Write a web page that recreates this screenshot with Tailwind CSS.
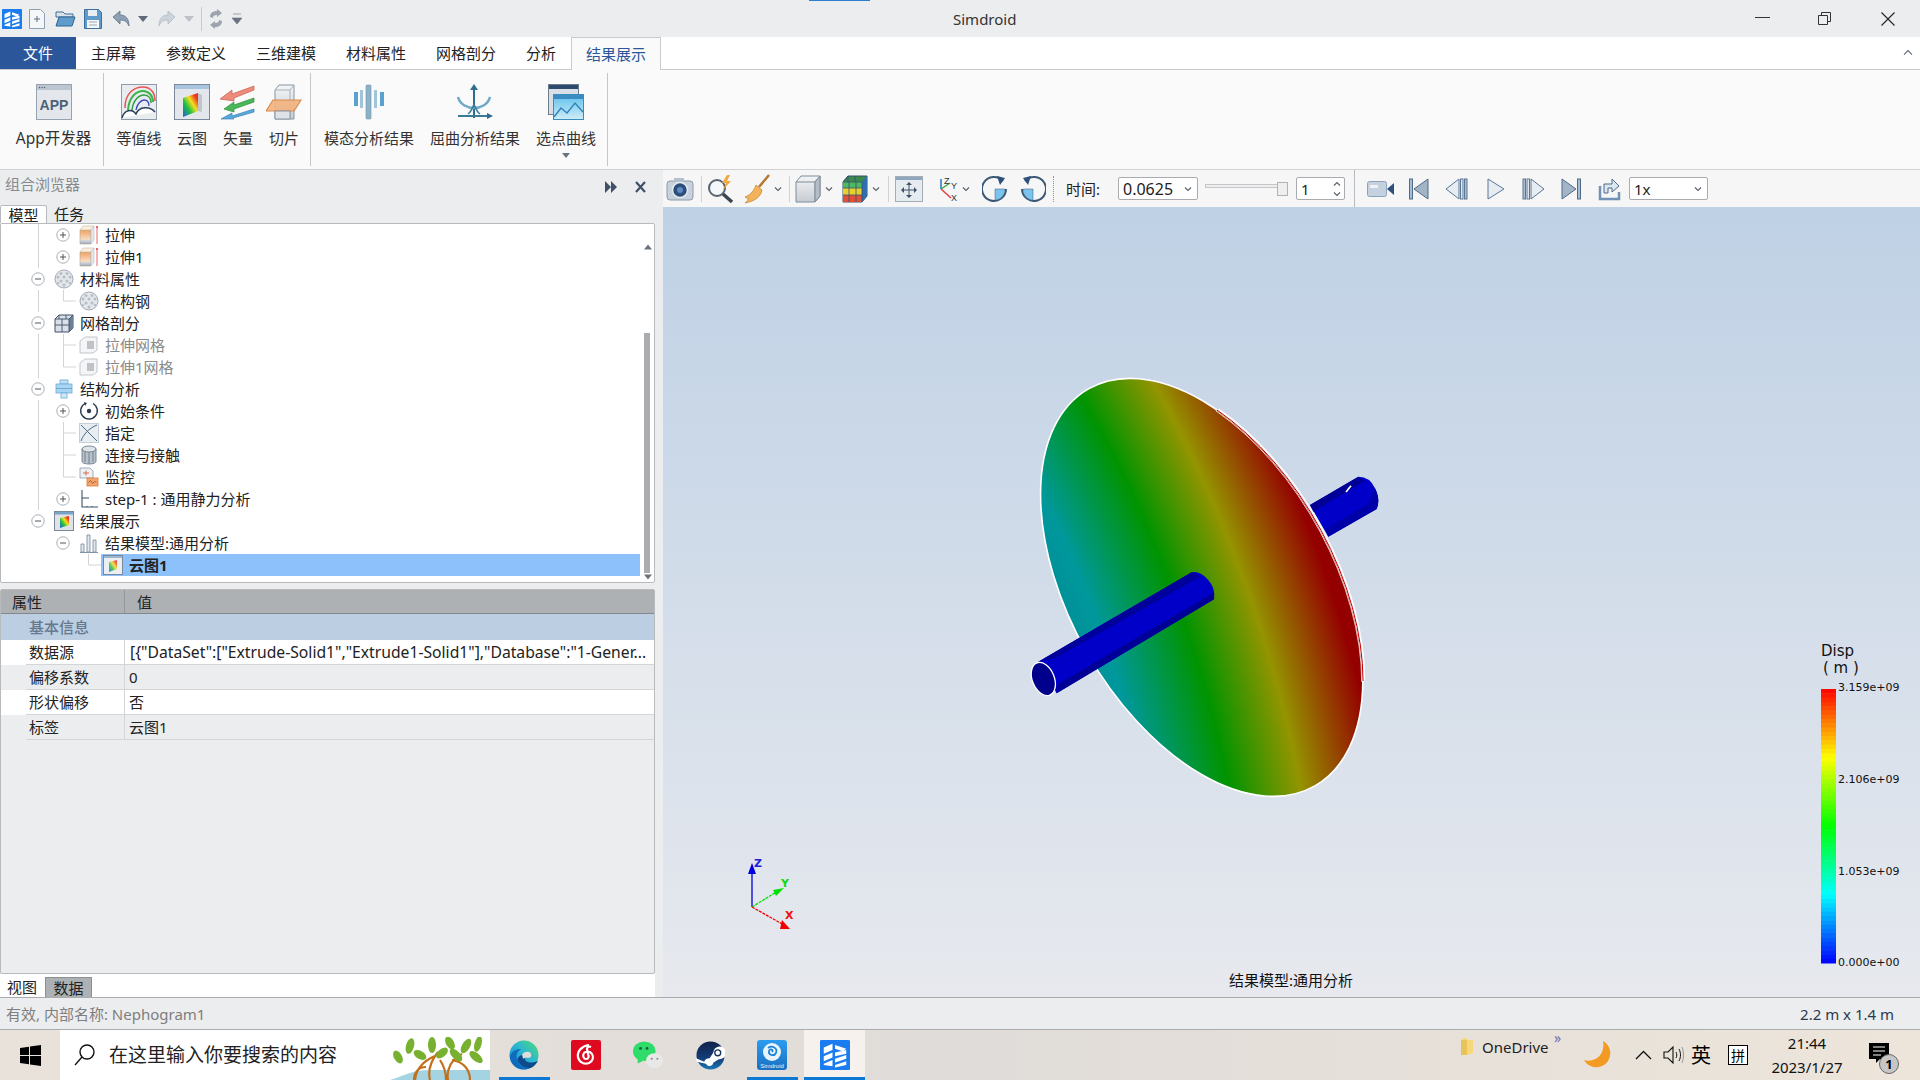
<!DOCTYPE html>
<html lang="zh-CN">
<head>
<meta charset="utf-8"/>
<title>Simdroid</title>
<script src="https://cdn.jsdelivr.net/npm/@tailwindcss/browser@4"></script>
</head>
<body class="w-[1920px] h-[1080px] overflow-hidden bg-[#ecedef] text-[15px] leading-[20px] text-[#222] font-['Noto_Sans','Noto_Sans_CJK_SC',sans-serif]">

<!-- shared icons -->
<svg class="absolute w-0 h-0" aria-hidden="true">
  <defs>
    <linearGradient id="orangeBox" x1="0" y1="0" x2="0" y2="1"><stop offset="0" stop-color="#f0a060"/><stop offset=".65" stop-color="#f8dcc0"/><stop offset=".8" stop-color="#c6d0dc"/><stop offset="1" stop-color="#98a8ba"/></linearGradient>
    <linearGradient id="greyBox" x1="0" y1="0" x2="0" y2="1"><stop offset="0" stop-color="#f4f5f6"/><stop offset="1" stop-color="#c6ccd3"/></linearGradient>
    <linearGradient id="heat" x1="0" y1="1" x2="1" y2="0"><stop offset="0" stop-color="#1c5fe0"/><stop offset=".35" stop-color="#20c040"/><stop offset=".6" stop-color="#f4e020"/><stop offset=".85" stop-color="#ee3020"/></linearGradient>
    <linearGradient id="sky" x1="0" y1="0" x2="0" y2="1"><stop offset="0" stop-color="#5cc0ec"/><stop offset="1" stop-color="#d0ecf8"/></linearGradient>
    <linearGradient id="edgeTop" x1="0" y1="1" x2="1" y2="0"><stop offset="0" stop-color="#1a84d8"/><stop offset=".55" stop-color="#2cb8d0"/><stop offset="1" stop-color="#50dc70"/></linearGradient>
    <linearGradient id="steamBg" x1="0" y1="0" x2="0" y2="1"><stop offset="0" stop-color="#10204a"/><stop offset=".6" stop-color="#143e78"/><stop offset="1" stop-color="#1a78b4"/></linearGradient>
    <linearGradient id="simBg" x1="0" y1="0" x2="0" y2="1"><stop offset="0" stop-color="#2a9cf0"/><stop offset="1" stop-color="#1a70c0"/></linearGradient>
    <symbol id="i-extrude" viewBox="0 0 20 20">
      <path d="M1 5h11v14H1z" fill="url(#orangeBox)" stroke="#b8a48e" stroke-width=".6"/>
      <path d="M1 5l3-4h11l-3 4z" fill="#fbeedd" stroke="#c8b8a4" stroke-width=".6"/>
      <path d="M12 5l3-4v14l-3 4z" fill="#e4e7eb" stroke="#b4bcc6" stroke-width=".6"/>
      <path d="M18 2v17" stroke="#e8686a" stroke-width="1"/><circle cx="18" cy="2" r="1" fill="#e03c3c"/>
    </symbol>
    <symbol id="i-material" viewBox="0 0 20 20">
      <circle cx="10" cy="10" r="9" fill="#e4e7ea" stroke="#a0acba" stroke-width="1"/>
      <g fill="#b6bdc6"><circle cx="7" cy="4.500" r="1.500"/><circle cx="13" cy="4.500" r="1.500"/><circle cx="4" cy="8" r="1.500"/><circle cx="10" cy="8" r="1.500"/><circle cx="16" cy="8" r="1.500"/><circle cx="7" cy="12" r="1.500"/><circle cx="13" cy="12" r="1.500"/><circle cx="4" cy="14" r="1.200"/><circle cx="16" cy="14" r="1.200"/><circle cx="10" cy="16" r="1.500"/></g>
    </symbol>
    <symbol id="i-mesh" viewBox="0 0 20 20">
      <path d="M1 6l4-4h14v13l-4 4H1z" fill="#d9e0e8" stroke="#3f5068" stroke-width="1"/>
      <path d="M15 6l4-4v13l-4 4z" fill="#6b7f96"/>
      <path d="M1 6h14v13M15 6l4-4M8 6v13M1 12h14M5 2v4M12 2v4" fill="none" stroke="#3f5068" stroke-width=".9"/>
    </symbol>
    <symbol id="i-meshpart" viewBox="0 0 20 20">
      <path d="M1 6l5-4h12v13l-4 3H1z" fill="#f4f5f6" stroke="#c2c6ca" stroke-width="1"/>
      <rect x="8" y="6" width="7" height="8" fill="#bfc3c7"/>
    </symbol>
    <symbol id="i-struct" viewBox="0 0 20 20">
      <rect x="6" y="1" width="8" height="4" fill="#bfe0f4" stroke="#6caad4" stroke-width=".8"/>
      <rect x="2" y="5" width="16" height="9" fill="#a8d6f2" stroke="#6caad4" stroke-width=".8"/>
      <path d="M2 9.500h16" stroke="#6caad4"/>
      <rect x="7" y="14" width="6" height="5" fill="#cfe8f8" stroke="#6caad4" stroke-width=".8"/>
    </symbol>
    <symbol id="i-init" viewBox="0 0 20 20">
      <path d="M6 2.500A8.300 8.300 0 1 0 14 2.500" fill="none" stroke="#2d3c52" stroke-width="1.400"/>
      <path d="M5 1l3 1-2 3z" fill="#2d3c52"/><circle cx="10" cy="10" r="2.200" fill="#2d3c52"/>
    </symbol>
    <symbol id="i-assign" viewBox="0 0 20 20">
      <rect x="0.500" y="0.500" width="19" height="19" fill="#e8edf2" stroke="#c6ced6"/>
      <path d="M2 18C4 12 10 5 18 2M2 2l16 16" fill="none" stroke="#4b6a8c" stroke-width="1"/>
    </symbol>
    <symbol id="i-contact" viewBox="0 0 20 20">
      <path d="M3 4v12c0 2 3 3 7 3s7-1 7-3V4z" fill="#b9c2ca" stroke="#5e6f80" stroke-width=".8"/>
      <ellipse cx="10" cy="4" rx="7" ry="3" fill="#dfe4e8" stroke="#5e6f80" stroke-width=".8"/>
      <path d="M6 7v10M10 7.500v11M14 7v10" stroke="#5e6f80" stroke-width=".8"/>
    </symbol>
    <symbol id="i-monitor" viewBox="0 0 20 20">
      <path d="M1 1h10l3 3v7H1z" fill="#eef1f4" stroke="#8c99a7" stroke-width=".8"/>
      <path d="M4 6h6M7 3.500v5" stroke="#d76a4a" stroke-width="1"/>
      <rect x="8" y="11" width="11" height="8" fill="#f2a66e" stroke="#d47c3c" stroke-width=".8"/>
      <path d="M9.500 15.500l2-2 2 3 2-2 2 1" fill="none" stroke="#a6501f" stroke-width=".8"/>
    </symbol>
    <symbol id="i-step" viewBox="0 0 20 20">
      <path d="M3 1v17h16M3 9h7" fill="none" stroke="#3d5068" stroke-width="1.100"/>
      <path d="M8 18v-1M13 18v-1" stroke="#3d5068"/>
    </symbol>
    <symbol id="i-result" viewBox="0 0 20 20">
      <rect x="0.500" y="0.500" width="19" height="19" fill="#dfe3e8" stroke="#7b8a9b"/>
      <rect x="1" y="1" width="18" height="2.500" fill="#7aa2c8"/>
      <path d="M6 7l9-2v9l-9 3z" fill="url(#heat)"/>
    </symbol>
    <symbol id="i-bars" viewBox="0 0 20 20">
      <path d="M2 11h3v8H2zM8 2h3v17H8zM14 7h3v12h-3z" fill="#e4e8ec" stroke="#7f92a6" stroke-width=".9"/>
      <path d="M1 19.500h18" stroke="#7f92a6"/>
    </symbol>
    <symbol id="i-cloud" viewBox="0 0 20 20">
      <rect x="0.500" y="0.500" width="19" height="19" fill="#eceff2" stroke="#7b8a9b"/>
      <rect x="1" y="1" width="18" height="2" fill="#9ab6d0"/>
      <path d="M6 7l8-2v9l-8 3z" fill="url(#heat)" opacity=".8"/>
    </symbol>
    <symbol id="i-plus" viewBox="0 0 14 14">
      <circle cx="7" cy="7" r="6.200" fill="#fff" stroke="#a9b0b7"/>
      <path d="M4 7h6M7 4v6" stroke="#555" stroke-width="1"/>
    </symbol>
    <symbol id="i-minus" viewBox="0 0 14 14">
      <circle cx="7" cy="7" r="6.200" fill="#fff" stroke="#a9b0b7"/>
      <path d="M4 7h6" stroke="#555" stroke-width="1"/>
    </symbol>
    <symbol id="i-chev" viewBox="0 0 10 10"><path d="M2 3.500L5 6.500 8 3.500" fill="none" stroke="#5b6470" stroke-width="1.200"/></symbol>
    <symbol id="i-logo" viewBox="0 0 24 24">
      <rect width="24" height="24" rx="1" fill="#1b7cf0"/>
      <path d="M3 6l7-3v5L3 11zM3 13l7-3v4l-7 3zM3 19l7-3v5l-7-1zM12 4l9 3-3 2-6-2zM12 10l9-2v3l-9 2zM12 15l9-3v3l-9 3zM12 20l9-3v3l-9 2z" fill="#fff"/>
    </symbol>
  </defs>
</svg>

<!-- title bar -->
<header class="relative flex h-[37px] items-center bg-[#ecedef]">
  <div class="absolute left-[809px] top-0 h-[1px] w-[61px] bg-[#2d7dd2]"></div>
  <svg class="ml-[2px] h-[20px] w-[20px]"><use href="#i-logo"/></svg>
  <svg class="ml-[7px] h-[20px] w-[16px]" viewBox="0 0 16 20"><path d="M.5.500h11l4 4v15H.5z" fill="#f4f6f8" stroke="#8fa0b2"/><path d="M5 10h6M8 7v6" stroke="#5b6f86"/></svg>
  <svg class="ml-[10px] h-[18px] w-[21px]" viewBox="0 0 21 18"><path d="M1 2h7l2 2h8v3H1z" fill="#dbe3ea" stroke="#3f6f9c"/><path d="M1 16l3-9h16l-3 9z" fill="#5f9ccc" stroke="#2f648f"/></svg>
  <svg class="ml-[8px] h-[20px] w-[18px]" viewBox="0 0 18 20"><path d="M.5.500h14l3 3v16H.5z" fill="#5f9ccc" stroke="#3a6f9e"/><rect x="4" y="1" width="9" height="6" fill="#e8eef4"/><rect x="3" y="11" width="12" height="8" fill="#f4f6f8"/><path d="M5 13h8M5 16h8" stroke="#9aaabb"/></svg>
  <svg class="ml-[10px] h-[18px] w-[18px]" viewBox="0 0 18 18"><path d="M1 7l7-6v4c6 0 9 4 9 11-2-4-4-6-9-6v4z" fill="#8da0b5" stroke="#5e7289" stroke-width=".8"/></svg>
  <svg class="ml-[8px] h-[10px] w-[10px]" viewBox="0 0 10 10"><path d="M0 2h10L5 8z" fill="#5e6a77"/></svg>
  <svg class="ml-[10px] h-[18px] w-[18px]" viewBox="0 0 18 18"><path d="M17 7l-7-6v4c-6 0-9 4-9 11 2-4 4-6 9-6v4z" fill="#cdd3da" stroke="#b2bac3" stroke-width=".8"/></svg>
  <svg class="ml-[8px] h-[10px] w-[10px]" viewBox="0 0 10 10"><path d="M0 2h10L5 8z" fill="#bcc1c7"/></svg>
  <div class="ml-[7px] h-[24px] w-[1px] bg-[#c8cacd]"></div>
  <svg class="ml-[6px] h-[20px] w-[16px]" viewBox="0 0 16 20"><path d="M2 8c0-4 3-6 7-6V0l5 4-5 4V6C6 6 5 7 5 9zM14 12c0 4-3 6-7 6v2l-5-4 5-4v2c3 0 4-1 4-3z" fill="#9da4ad"/></svg>
  <svg class="ml-[8px] h-[12px] w-[10px]" viewBox="0 0 10 12"><path d="M1 1h8M0 5h10L5 11z" fill="#6a747f" stroke="#6a747f" stroke-width=".6"/></svg>
  <span class="absolute left-[953px] top-[9px] text-[15px] text-[#333]">Simdroid</span>
  <svg class="absolute left-[1755px] top-[17px] h-[2px] w-[15px]"><rect width="15" height="1" fill="#333"/></svg>
  <svg class="absolute left-[1818px] top-[12px] h-[13px] w-[13px]" viewBox="0 0 13 13"><path d="M.5 3.500h9v9h-9zM3.500 3.500v-3h9v9h-3" fill="none" stroke="#333"/></svg>
  <svg class="absolute left-[1881px] top-[12px] h-[14px] w-[14px]" viewBox="0 0 14 14"><path d="M.5.500l13 13M13.500.500l-13 13" stroke="#222" stroke-width="1.100"/></svg>
</header>

<!-- ribbon tabs -->
<nav class="relative flex h-[33px] bg-white border-b border-[#c9cbce] text-[15px]">
  <div class="flex w-[76px] items-center justify-center bg-[#2b579a] text-white">文件</div>
  <div class="flex w-[75px] items-center justify-center">主屏幕</div>
  <div class="flex w-[90px] items-center justify-center">参数定义</div>
  <div class="flex w-[90px] items-center justify-center">三维建模</div>
  <div class="flex w-[90px] items-center justify-center">材料属性</div>
  <div class="flex w-[90px] items-center justify-center">网格剖分</div>
  <div class="flex w-[60px] items-center justify-center">分析</div>
  <div class="flex h-[33px] w-[90px] items-center justify-center border border-b-0 border-[#c9cbce] bg-[#fafafa] text-[#2b579a]">结果展示</div>
  <svg class="absolute left-[1903px] top-[12px] h-[8px] w-[10px]" viewBox="0 0 12 10"><path d="M1 7l5-5 5 5" fill="none" stroke="#5b6470" stroke-width="1.300"/></svg>
</nav>

<!-- ribbon -->
<section class="flex h-[100px] bg-[#fafafa] border-b border-[#d0d2d4] text-[15px] text-[#333]">
  <div class="my-[3px] flex w-[104px] border-r border-[#c4c6c9] pl-[4px]">
    <div class="flex w-[100px] flex-col items-center pt-[11px]">
      <svg class="h-[36px] w-[36px]" viewBox="0 0 36 36"><rect x=".5" y=".5" width="35" height="35" fill="#e3e7ec" stroke="#97a3b0"/><rect x="1" y="1" width="34" height="5" fill="#bcc6d0"/><circle cx="3.500" cy="3.500" r=".7" fill="#556"/><circle cx="6" cy="3.500" r=".7" fill="#556"/><circle cx="8.500" cy="3.500" r=".7" fill="#556"/><text x="18" y="26" text-anchor="middle" font-size="14" font-weight="700" fill="#4d6175" font-family="Liberation Sans">APP</text></svg>
      <span class="mt-[8px] whitespace-nowrap text-[15.5px]">App开发器</span>
    </div>
  </div>
  <div class="my-[3px] flex w-[207px] border-r border-[#c4c6c9] pl-[5px]">
    <div class="flex w-[60px] flex-col items-center pt-[11px]">
      <svg class="h-[36px] w-[36px]" viewBox="0 0 36 36"><rect x=".5" y=".5" width="35" height="35" fill="#e8ecef" stroke="#8e9bab"/><path d="M4 24C4 8 14 3 22 3s12 6 12 14" fill="none" stroke="#e55454" stroke-width="1.500"/><path d="M7 26C8 12 16 7 22 7s10 5 10 11" fill="none" stroke="#3bb54a" stroke-width="2"/><path d="M11 26C12 16 18 11 23 11s7 4 7 8" fill="none" stroke="#2f9e44" stroke-width="1.500"/><path d="M15 26c1-6 5-10 8-10s5 2 5 6" fill="none" stroke="#3a47c4" stroke-width="1.300"/><path d="M1 34c2-8 10-10 14-4 3-8 14-8 19-2" fill="#fff" stroke="#2a3d5a" stroke-width="1.400"/></svg>
      <span class="mt-[8px]">等值线</span>
    </div>
    <div class="flex w-[46px] flex-col items-center pt-[11px]">
      <svg class="h-[36px] w-[36px] shrink-0" viewBox="0 0 36 36"><rect x=".5" y=".5" width="35" height="35" fill="#e3e7ec" stroke="#7b8a9b"/><rect x="1" y="1" width="34" height="4" fill="#a9c4de"/><path d="M9 14l15-5v18l-15 6z" fill="url(#heat)"/><path d="M24 9l4 2v17l-4-1z" fill="#c2c6ca"/></svg>
      <span class="mt-[8px] whitespace-nowrap">云图</span>
    </div>
    <div class="flex w-[46px] flex-col items-center pt-[11px]">
      <svg class="h-[36px] w-[36px]" viewBox="0 0 36 36"><path d="M34 2L12 10v-4L0 15l14 2v-3l20-8z" fill="#ee8c7c" stroke="#c65e50" stroke-width=".7"/><path d="M34 14L14 21v-3L4 25l10 3v-3l20-7z" fill="#48b858" stroke="#2e8a3e" stroke-width=".7"/><path d="M34 25L12 32v-3L1 35h13l-1-1 21-6z" fill="#58a8dc" stroke="#3a82b4" stroke-width=".7"/></svg>
      <span class="mt-[8px]">矢量</span>
    </div>
    <div class="flex w-[46px] flex-col items-center pt-[11px]">
      <svg class="h-[36px] w-[36px]" viewBox="0 0 36 36"><path d="M9 6l4-5h15v34H9z" fill="url(#greyBox)" stroke="#8794a2"/><path d="M9 6h15v29M24 6l4-5" fill="none" stroke="#a9b2bc"/><path d="M7 16h28l-7 11H0z" fill="#f3b27e" stroke="#d98a4a" stroke-width="1.200" fill-opacity=".9"/><path d="M9 27h15v8H9z" fill="#dfe3e8" stroke="#8794a2"/></svg>
      <span class="mt-[8px]">切片</span>
    </div>
  </div>
  <div class="relative my-[3px] flex w-[297px] border-r border-[#c4c6c9] pl-[5px]">
    <div class="flex w-[106px] flex-col items-center pt-[11px]">
      <svg class="h-[36px] w-[36px]" viewBox="0 0 36 36"><rect x="15" y="1" width="5" height="34" rx="1" fill="#8cb2c8" stroke="#6e93a8" stroke-width=".6"/><rect x="3" y="8" width="4" height="14" fill="#5aa0d0"/><rect x="9" y="6" width="3" height="18" fill="#a2c4d8"/><rect x="23" y="6" width="3" height="18" fill="#a2c4d8"/><rect x="29" y="8" width="4" height="14" fill="#5aa0d0"/></svg>
      <span class="mt-[8px]">模态分析结果</span>
    </div>
    <div class="flex w-[106px] flex-col items-center pt-[11px]">
      <svg class="h-[36px] w-[36px]" viewBox="0 0 36 36"><path d="M17 34V4" stroke="#2e6d8c" stroke-width="2"/><path d="M17 0l-4 6h8z" fill="#2e6d8c"/><path d="M1 32h30" stroke="#3a7a96" stroke-width="2"/><path d="M36 32l-6-3v6z" fill="#2e6d8c"/><path d="M1 13c2 8 10 11 16 11s14-3 16-11" fill="none" stroke="#6ea8c8" stroke-width="2.500"/><path d="M11 30c3-2 4-4 6-10 2 6 3 8 6 10" fill="none" stroke="#3a7a96" stroke-width="1.500"/></svg>
      <span class="mt-[8px]">屈曲分析结果</span>
    </div>
    <div class="flex w-[76px] flex-col items-center pt-[11px]">
      <svg class="h-[36px] w-[36px]" viewBox="0 0 36 36"><rect x=".5" y=".5" width="30" height="30" fill="#d8dfe6" stroke="#6c7c8c"/><rect x="1" y="1" width="29" height="4" fill="#2d4a6c"/><rect x="5.500" y="10.500" width="30" height="25" fill="url(#sky)" stroke="#3a8cc0"/><rect x="6" y="11" width="29" height="4" fill="#3a8cc0"/><path d="M6 33l7-9 6 5 8-10 8 9" fill="none" stroke="#2d84bc" stroke-width="1.400"/></svg>
      <span class="mt-[8px] whitespace-nowrap">选点曲线</span>
      <svg class="mt-[4px] h-[8px] w-[10px]" viewBox="0 0 10 8"><path d="M1 1h8L5 6z" fill="#6a747f"/></svg>
    </div>
  </div>
</section>

<main class="flex h-[827px]">
  <!-- left panel -->
  <aside class="flex w-[663px] shrink-0 flex-col">
    <div class="relative flex h-[35px] w-[655px] items-center pb-[7px] pl-[5px] text-[#868a8e]">
      组合浏览器
      <svg class="absolute left-[604px] top-[10px] h-[14px] w-[14px]" viewBox="0 0 14 14"><path d="M1 1l6 6-6 6zM7 1l6 6-6 6z" fill="#3f5068"/></svg>
      <svg class="absolute left-[634px] top-[10px] h-[14px] w-[13px]" viewBox="0 0 13 14"><path d="M2 2l9 10M11 2L2 12" stroke="#3f5068" stroke-width="2.200"/></svg>
    </div>
    <div class="flex h-[18px] w-[655px] items-end text-[15px]">
      <div class="flex h-[18px] w-[47px] items-center justify-center rounded-t-[2px] border border-b-0 border-[#b8bbbe] bg-white">模型</div>
      <div class="flex h-[18px] w-[44px] items-center justify-center">任务</div>
    </div>
    <div class="relative h-[360px] w-[655px] rounded-[2px] border border-[#b8bbbe] bg-white text-[15px]">
      <svg class="absolute left-0 top-0 h-[358px] w-[150px]" fill="none" stroke="#d2d4d7">
        <path d="M37.500 0V44M37.500 66V88M37.500 110V154M37.500 176V286"/>
        <path d="M62.500 66V77H75M62.500 110V121H75M62.500 121V143H75M62.500 198V253M62.500 209H75M62.500 231H75M62.500 253H75"/>
        <path d="M87.500 330V341H100"/>
      </svg>
      <div class="relative flex h-[22px] items-center pl-[55px]"><svg class="h-[14px] w-[14px]"><use href="#i-plus"/></svg><svg class="ml-[9px] h-[20px] w-[20px]"><use href="#i-extrude"/></svg><span class="ml-[6px]">拉伸</span></div>
      <div class="relative flex h-[22px] items-center pl-[55px]"><svg class="h-[14px] w-[14px]"><use href="#i-plus"/></svg><svg class="ml-[9px] h-[20px] w-[20px]"><use href="#i-extrude"/></svg><span class="ml-[6px]">拉伸1</span></div>
      <div class="relative flex h-[22px] items-center pl-[30px]"><svg class="h-[14px] w-[14px]"><use href="#i-minus"/></svg><svg class="ml-[9px] h-[20px] w-[20px]"><use href="#i-material"/></svg><span class="ml-[6px]">材料属性</span></div>
      <div class="relative flex h-[22px] items-center pl-[78px]"><svg class="h-[20px] w-[20px]"><use href="#i-material"/></svg><span class="ml-[6px]">结构钢</span></div>
      <div class="relative flex h-[22px] items-center pl-[30px]"><svg class="h-[14px] w-[14px]"><use href="#i-minus"/></svg><svg class="ml-[9px] h-[20px] w-[20px]"><use href="#i-mesh"/></svg><span class="ml-[6px]">网格剖分</span></div>
      <div class="relative flex h-[22px] items-center pl-[78px] text-[#8a8a8a]"><svg class="h-[20px] w-[20px]"><use href="#i-meshpart"/></svg><span class="ml-[6px]">拉伸网格</span></div>
      <div class="relative flex h-[22px] items-center pl-[78px] text-[#8a8a8a]"><svg class="h-[20px] w-[20px]"><use href="#i-meshpart"/></svg><span class="ml-[6px]">拉伸1网格</span></div>
      <div class="relative flex h-[22px] items-center pl-[30px]"><svg class="h-[14px] w-[14px]"><use href="#i-minus"/></svg><svg class="ml-[9px] h-[20px] w-[20px]"><use href="#i-struct"/></svg><span class="ml-[6px]">结构分析</span></div>
      <div class="relative flex h-[22px] items-center pl-[55px]"><svg class="h-[14px] w-[14px]"><use href="#i-plus"/></svg><svg class="ml-[9px] h-[20px] w-[20px]"><use href="#i-init"/></svg><span class="ml-[6px]">初始条件</span></div>
      <div class="relative flex h-[22px] items-center pl-[78px]"><svg class="h-[20px] w-[20px]"><use href="#i-assign"/></svg><span class="ml-[6px]">指定</span></div>
      <div class="relative flex h-[22px] items-center pl-[78px]"><svg class="h-[20px] w-[20px]"><use href="#i-contact"/></svg><span class="ml-[6px]">连接与接触</span></div>
      <div class="relative flex h-[22px] items-center pl-[78px]"><svg class="h-[20px] w-[20px]"><use href="#i-monitor"/></svg><span class="ml-[6px]">监控</span></div>
      <div class="relative flex h-[22px] items-center pl-[55px]"><svg class="h-[14px] w-[14px]"><use href="#i-plus"/></svg><svg class="ml-[9px] h-[20px] w-[20px]"><use href="#i-step"/></svg><span class="ml-[6px]">step-1 : 通用静力分析</span></div>
      <div class="relative flex h-[22px] items-center pl-[30px]"><svg class="h-[14px] w-[14px]"><use href="#i-minus"/></svg><svg class="ml-[9px] h-[20px] w-[20px]"><use href="#i-result"/></svg><span class="ml-[6px]">结果展示</span></div>
      <div class="relative flex h-[22px] items-center pl-[55px]"><svg class="h-[14px] w-[14px]"><use href="#i-minus"/></svg><svg class="ml-[9px] h-[20px] w-[20px]"><use href="#i-bars"/></svg><span class="ml-[6px]">结果模型:通用分析</span></div>
      <div class="relative ml-[100px] mr-[14px] flex h-[22px] items-center bg-[#8cc1fb] pl-[2px] font-bold"><svg class="h-[20px] w-[20px]"><use href="#i-cloud"/></svg><span class="ml-[6px]">云图1</span></div>
      <!-- scrollbar -->
      <svg class="absolute left-[642px] top-[20px] h-[6px] w-[10px]" viewBox="0 0 10 6"><path d="M1 5.500L5 .5l4 5z" fill="#6a747f"/></svg>
      <div class="absolute left-[643px] top-[109px] h-[240px] w-[6px] bg-[#a9adb0]"></div>
      <svg class="absolute left-[642px] top-[350px] h-[6px] w-[10px]" viewBox="0 0 10 6"><path d="M1 .5L5 5.500l4-5z" fill="#6a747f"/></svg>
    </div>

    <!-- property view -->
    <div class="mt-[6px] flex h-[385px] w-[655px] flex-col rounded-[2px] border border-[#b8bbbe] bg-[#ecedef] text-[15px]">
      <div class="flex h-[24px] shrink-0 items-stretch border-b border-[#84888c] bg-[#adb1b4]">
        <div class="flex w-[124px] items-center border-r border-[#94989c] pl-[11px]">属性</div>
        <div class="flex items-center pl-[12px]">值</div>
      </div>
      <div class="flex h-[26px] shrink-0 items-center bg-[#bccfe2] pl-[28px] font-medium text-[#66788f]">基本信息</div>
      <div class="flex h-[25px] shrink-0 bg-white">
        <div class="w-[25px]"></div>
        <div class="flex w-[99px] items-center border-r border-b border-[#d4d5d7] pl-[3px]">数据源</div>
        <div class="flex flex-1 items-center overflow-hidden whitespace-nowrap border-b border-[#d4d5d7] pl-[5px] text-[15.7px]">[{"DataSet":["Extrude-Solid1","Extrude1-Solid1"],"Database":"1-Gener...</div>
      </div>
      <div class="flex h-[25px] shrink-0">
        <div class="w-[25px]"></div>
        <div class="flex w-[99px] items-center border-r border-b border-[#d4d5d7] pl-[3px]">偏移系数</div>
        <div class="flex flex-1 items-center border-b border-[#d4d5d7] pl-[4px]">0</div>
      </div>
      <div class="flex h-[25px] shrink-0 bg-white">
        <div class="w-[25px]"></div>
        <div class="flex w-[99px] items-center border-r border-b border-[#d4d5d7] pl-[3px]">形状偏移</div>
        <div class="flex flex-1 items-center border-b border-[#d4d5d7] pl-[4px]">否</div>
      </div>
      <div class="flex h-[25px] shrink-0">
        <div class="w-[25px]"></div>
        <div class="flex w-[99px] items-center border-r border-b border-[#d4d5d7] pl-[3px]">标签</div>
        <div class="flex flex-1 items-center border-b border-[#d4d5d7] pl-[4px]">云图1</div>
      </div>
    </div>

    <div class="flex h-[23px] w-[655px] items-end bg-white pl-[5px] text-[15px]">
      <div class="flex h-[20px] w-[34px] items-center justify-center">视图</div>
      <div class="ml-[6px] flex h-[20px] w-[47px] items-center justify-center border border-b-0 border-[#8c9094] bg-[#adb1b4]">数据</div>
    </div>
  </aside>

  <!-- 3D view -->
  <div class="flex flex-1 flex-col">
    <div class="flex h-[37px] shrink-0 items-center bg-[#f6f6f6] text-[15px]">
      <svg class="ml-[3px] h-[28px] w-[28px]" viewBox="0 0 28 28"><rect x="1" y="6" width="26" height="19" rx="3" fill="#c8d2dc" stroke="#8c9ba9"/><rect x="8" y="3" width="10" height="4" fill="#b4c0cc"/><circle cx="14" cy="15" r="7.500" fill="#2c4f7c" stroke="#e8edf2" stroke-width="1.500"/><circle cx="14" cy="15" r="3" fill="#5e8cc0"/></svg>
      <div class="ml-[7px] h-[26px] w-[1px] bg-[#d0d2d5]"></div>
      <svg class="ml-[4px] h-[30px] w-[30px]" viewBox="0 0 30 30"><circle cx="11" cy="14" r="8" fill="#f4f8fb" stroke="#59636e" stroke-width="2"/><path d="M17 20l9 8" stroke="#3c4650" stroke-width="3.500"/><path d="M21 1l-5 8h4l-3 7 8-9h-4l3-6z" fill="#f0a840"/></svg>
      <svg class="ml-[8px] h-[30px] w-[26px]" viewBox="0 0 26 30"><path d="M25 1L15 13" stroke="#b5772e" stroke-width="2.500"/><path d="M12 11l6 5c-1 6-6 11-17 13 3-2 3-4 3-5-1 0-2 0-3-1 5-2 9-6 11-12z" fill="#f3b35a" stroke="#c98a34" stroke-width=".8"/></svg>
      <svg class="ml-[3px] h-[10px] w-[10px]"><use href="#i-chev"/></svg>
      <div class="ml-[6px] h-[26px] w-[1px] bg-[#d0d2d5]"></div>
      <svg class="ml-[5px] h-[28px] w-[26px]" viewBox="0 0 26 28"><path d="M1 7l5-6h19v20l-5 6H1z" fill="url(#greyBox)" stroke="#7f8c99"/><path d="M1 7h19v20M20 7l5-6" fill="none" stroke="#7f8c99"/><path d="M20 7l5-6v20l-5 6z" fill="#b4bcc5" stroke="#7f8c99"/></svg>
      <svg class="ml-[3px] h-[10px] w-[10px]"><use href="#i-chev"/></svg>
      <svg class="ml-[8px] h-[28px] w-[26px]" viewBox="0 0 26 28"><path d="M1 7l5-6h19v20l-5 6H1z" fill="#3a8a4e" stroke="#37506b"/><path d="M1 7h19v6H1z" fill="#4eb860"/><path d="M1 13h19v7H1z" fill="#e8d030"/><path d="M1 20h19v7H1z" fill="#e05038"/><path d="M20 7l5-6v20l-5 6z" fill="#2f6fb0"/><path d="M1 7h19v20M7 7v20M14 7v20M1 13h19M1 20h19M6 1v6M13 1v6M1 7l5-6" fill="none" stroke="#37506b" stroke-width=".8"/></svg>
      <svg class="ml-[3px] h-[10px] w-[10px]"><use href="#i-chev"/></svg>
      <div class="ml-[7px] h-[26px] w-[1px] bg-[#d0d2d5]"></div>
      <svg class="ml-[6px] h-[26px] w-[28px]" viewBox="0 0 28 26"><rect x=".5" y=".5" width="27" height="25" fill="#e6ebf0" stroke="#a3adb8"/><rect x="1" y="1" width="26" height="3" fill="#8ea6be"/><path d="M14 7v14M7 14h14" stroke="#3f5068"/><path d="M14 6l-3 3h6zM14 22l-3-3h6zM6 14l3-3v6zM22 14l-3-3v6z" fill="#3f5068"/></svg>
      <svg class="ml-[13px] h-[26px] w-[24px]" viewBox="0 0 24 26"><path d="M5 13V3" stroke="#2a70c8" stroke-width="1.500"/><path d="M5 13l9-6" stroke="#3cab4a" stroke-width="1.500"/><path d="M5 13l10 9" stroke="#e04040" stroke-width="1.500"/><text x="8" y="8" font-size="9" fill="#333" font-family="Liberation Sans">Z</text><text x="15" y="13" font-size="9" fill="#333" font-family="Liberation Sans">Y</text><text x="15" y="25" font-size="9" fill="#333" font-family="Liberation Sans">X</text></svg>
      <svg class="ml-[1px] h-[10px] w-[10px]"><use href="#i-chev"/></svg>
      <svg class="ml-[11px] h-[28px] w-[26px]" viewBox="0 0 26 28"><path d="M21 6a12 12 0 1 0 3 8" fill="none" stroke="#3d5876" stroke-width="2"/><path d="M15 1l8 2-5 7z" fill="#2c4f7c"/><path d="M13 14h10c0 6-4 11-10 11z" fill="#7cc4ee" stroke="#3d5876" stroke-width=".5"/></svg>
      <svg class="ml-[12px] h-[28px] w-[26px]" viewBox="0 0 26 28"><path d="M5 6a12 12 0 1 1-3 8" fill="none" stroke="#3d5876" stroke-width="2"/><path d="M11 1L3 3l5 7z" fill="#2c4f7c"/><path d="M13 14H3c0 6 4 11 10 11z" fill="#7cc4ee" stroke="#3d5876" stroke-width=".5"/></svg>
      <div class="ml-[7px] h-[26px] w-0 border-l border-dotted border-[#8c9094]"></div>
      <span class="ml-[12px] w-[52px]">时间:</span>
      <div class="flex h-[23px] w-[80px] items-center justify-between rounded-[2px] border border-[#a8acb0] bg-white pl-[4px] pr-[4px] text-[16px]">0.0625<svg class="h-[10px] w-[10px]"><use href="#i-chev"/></svg></div>
      <div class="relative ml-[7px] h-[14px] w-[83px]">
        <div class="absolute left-0 top-[2px] h-[4px] w-[83px] border border-[#c4c6c9] bg-[#eeeeee]"></div>
        <div class="absolute right-0 top-0 h-[14px] w-[11px] border border-[#b0b3b6] bg-[#eeeeee]"></div>
      </div>
      <div class="ml-[8px] flex h-[23px] w-[49px] items-center justify-between rounded-[2px] border border-[#a8acb0] bg-white pl-[4px] pr-[1px]">1
        <span class="flex flex-col"><svg class="h-[10px] w-[12px] rotate-180"><use href="#i-chev"/></svg><svg class="h-[10px] w-[12px]"><use href="#i-chev"/></svg></span>
      </div>
      <div class="ml-[9px] h-[37px] w-[1px] bg-[#b8bbbe]"></div>
      <svg class="ml-[12px] h-[20px] w-[28px]" viewBox="0 0 28 20"><rect x=".5" y="2.500" width="19" height="15" rx="2" fill="#c4d2e0" stroke="#8ea2b6"/><rect x="3" y="6" width="8" height="3" fill="#f0f3f6"/><path d="M20 10l7-6v12z" fill="#2c4f7c"/></svg>
      <svg class="ml-[14px] h-[22px] w-[20px]" viewBox="0 0 20 22"><rect x="0.500" y="1" width="3" height="20" fill="#a9bdd2" stroke="#4f6b8a"/><path d="M19 1v20L5 11z" fill="#a3b4c6" stroke="#4f6b8a"/></svg>
      <svg class="ml-[16px] h-[22px] w-[23px]" viewBox="0 0 23 22"><path d="M14 1v20L1 11z" fill="#e6ecf2" stroke="#5a7796"/><rect x="15.500" y="1" width="2.500" height="20" fill="#e0e7ee" stroke="#5a7796"/><rect x="19.500" y="1" width="2.500" height="20" fill="#a9bdd2" stroke="#5a7796"/></svg>
      <svg class="ml-[19px] h-[22px] w-[18px]" viewBox="0 0 18 22"><path d="M1 1v20l16-10z" fill="#e6ecf2" stroke="#5a7796"/></svg>
      <svg class="ml-[17px] h-[22px] w-[23px]" viewBox="0 0 23 22"><path d="M9 1v20l13-10z" fill="#e6ecf2" stroke="#5a7796"/><rect x="1" y="1" width="2.500" height="20" fill="#a9bdd2" stroke="#5a7796"/><rect x="5" y="1" width="2.500" height="20" fill="#e0e7ee" stroke="#5a7796"/></svg>
      <svg class="ml-[16px] h-[22px] w-[20px]" viewBox="0 0 20 22"><path d="M1 1v20l14-10z" fill="#a3b4c6" stroke="#4f6b8a"/><rect x="16.500" y="1" width="3" height="20" fill="#a9bdd2" stroke="#4f6b8a"/></svg>
      <svg class="ml-[17px] h-[24px] w-[23px]" viewBox="0 0 23 24"><path d="M2 9v13h19v-7" fill="none" stroke="#7092b4" stroke-width="2.500"/><path d="M6 16V7h8V2l7 7-7 6v-4h-4v5z" fill="#dbe7f1" stroke="#4f6b8a"/></svg>
      <div class="ml-[8px] flex h-[23px] w-[79px] items-center justify-between rounded-[2px] border border-[#a8acb0] bg-white pl-[4px] pr-[4px]">1x<svg class="h-[10px] w-[10px]"><use href="#i-chev"/></svg></div>
    </div>

    <div class="relative flex-1 bg-linear-to-b from-[#bfd1e5] to-[#e7e9ee]">
      <svg class="absolute inset-0 h-full w-full" viewBox="663 207 1257 790">
        <defs>
          <!-- drawn in page space, the transform cancels the ellipse's own rotation.
               Far-off centre because the colour bands on the disk are slightly curved -->
          <radialGradient id="disp" gradientUnits="userSpaceOnUse" cx="-10" cy="1033" r="1440" gradientTransform="rotate(-60.300 1201.700 587.400)">
            <stop offset=".8" stop-color="#009098"/><stop offset=".82" stop-color="#00989c"/><stop offset=".877" stop-color="#009400"/><stop offset=".926" stop-color="#949400"/><stop offset=".981" stop-color="#940000"/>
          </radialGradient>
        </defs>
        <!-- rear shaft -->
        <g transform="translate(1000 360) scale(.33333)">
          <path d="M930 435L1075 350Q1110 350 1125 385Q1142 420 1130 447L985 530Z" fill="#0000c8"/>
          <path d="M930 435L1075 350L1095 362L940 455Z" fill="#000096"/>
          <path d="M1125 385Q1142 420 1130 447L985 530L975 508L1105 432Z" fill="#0000a8"/>
          <path d="M1038 396L1053 377" stroke="#fff" stroke-width="5"/>
        </g>
        <!-- disk, its upper right rim shows as white / red / white -->
        <ellipse cx="1201.700" cy="587.400" rx="228.500" ry="132" transform="rotate(60.300 1201.700 587.400)" fill="url(#disp)" stroke="#fff" stroke-width="1.600"/>
        <path d="M1217 410A228.500 132 60.300 0 1 1363 681" transform="translate(1.500 -.8)" fill="none" stroke="#fff" stroke-width="1.500"/>
        <path d="M1217 410A228.500 132 60.300 0 1 1363 681" fill="none" stroke="#c00000" stroke-width="1"/>
        <path d="M1217 410A228.500 132 60.300 0 1 1363 681" transform="translate(-1.300 .7)" fill="none" stroke="#fff" stroke-width=".8"/>
        <!-- front shaft -->
        <g transform="translate(1000 360) scale(.33333)">
          <path d="M115 905L575 637Q600 632 625 660Q648 688 642 718L170 1000Z" fill="#0000c8"/>
          <path d="M115 905L575 637L600 650L165 895Z" fill="#00009a"/>
          <path d="M170 975L640 698L642 718L170 1000Z" fill="#000096"/>
          <ellipse cx="130" cy="957" rx="33" ry="52" transform="rotate(-22 130 957)" fill="#00008c" stroke="#fff" stroke-width="4"/>
        </g>
        <!-- triad -->
        <g stroke-width="1.300" fill="none">
          <path d="M752 907V868" stroke="#0000dc"/>
          <path d="M752 907L778 891" stroke="#00e000" stroke-dasharray="3 1"/>
          <path d="M752 907L784 925" stroke="#f00000" stroke-dasharray="3 1"/>
        </g>
        <path d="M752 863L756 874H748Z" fill="#0000dc"/>
        <path d="M784 888L776 896L773 890Z" fill="#00e000"/>
        <path d="M790 929H780L782 920Z" fill="#f00000"/>
        <text x="754" y="867" font-family="DejaVu Sans" font-size="11" font-weight="700" fill="#2020d8">Z</text>
        <text x="781" y="887" font-family="DejaVu Sans" font-size="11" font-weight="700" fill="#10d810">Y</text>
        <text x="785" y="919" font-family="DejaVu Sans" font-size="11" font-weight="700" fill="#f01010">X</text>
        <!-- legend -->
        <g id="bands"></g>
        <g font-family="DejaVu Sans" font-size="11" fill="#111">
          <text x="1838" y="691">3.159e+09</text>
          <text x="1838" y="783">2.106e+09</text>
          <text x="1838" y="875">1.053e+09</text>
          <text x="1838" y="966">0.000e+00</text>
        </g>
        <g font-family="DejaVu Sans" font-size="15" fill="#111">
          <text x="1821" y="656">Disp</text>
          <text x="1823" y="673">( m )</text>
        </g>
      </svg>
      <span class="absolute left-[566px] top-[763px] whitespace-nowrap text-[15px] text-[#111]">结果模型:通用分析</span>
    </div>
  </div>
</main>

<!-- status bar -->
<div class="flex h-[33px] items-center justify-between border-y border-[#a9abae] bg-[#ecedef] pl-[6px] pr-[26px] text-[15px]">
  <span class="text-[#7e7e7e]">有效, 内部名称: Nephogram1</span>
  <span class="text-[#2b3a50]">2.2 m x 1.4 m</span>
</div>

<!-- taskbar -->
<footer class="relative flex h-[50px] bg-linear-to-r from-[#e9e2da] via-[#e0dcd9] to-[#ede5da]">
  <div class="flex w-[60px] items-center justify-center">
    <svg class="h-[21px] w-[21px]" viewBox="0 0 21 21"><path d="M0 3l9-1.300V10H0zM10 1.500L21 0v10H10zM0 11h9v8.300L0 18zM10 11h11v10l-11-1.500z" fill="#000"/></svg>
  </div>
  <div class="relative flex w-[430px] items-center overflow-hidden bg-white pl-[13px] text-[19px] text-[#222]">
    <svg class="h-[24px] w-[24px]" viewBox="0 0 24 24"><circle cx="14" cy="9" r="7" fill="none" stroke="#111" stroke-width="1.400"/><path d="M9 14l-7 8" stroke="#111" stroke-width="1.400"/></svg>
    <span class="ml-[12px] whitespace-nowrap">在这里输入你要搜索的内容</span>
    <svg class="absolute left-[330px] top-[7px] h-[43px] w-[100px]" viewBox="0 0 100 43">
      <path d="M0 43c14-4 22-10 40-10h60v10z" fill="#a4d4e2"/>
      <path d="M25 43c1-10 6-18 20-24M40 43c-2-8 0-18 8-28M56 43c0-8-2-14-6-20M58 43c-2-10 4-22 14-26M80 43c0-10-6-18-18-20M36 30c-8 0-12 6-12 13" fill="none" stroke="#c2701a" stroke-width="2.200"/>
      <g fill="#78b030"><ellipse cx="8" cy="20" rx="4" ry="7" transform="rotate(-30 8 20)"/><ellipse cx="20" cy="9" rx="4" ry="8" transform="rotate(15 20 9)"/><ellipse cx="30" cy="18" rx="4" ry="7" transform="rotate(-60 30 18)"/><ellipse cx="42" cy="8" rx="4" ry="8"/><ellipse cx="52" cy="16" rx="4" ry="7" transform="rotate(50 52 16)"/><ellipse cx="60" cy="6" rx="4" ry="7" transform="rotate(-30 60 6)"/><ellipse cx="66" cy="18" rx="4" ry="8" transform="rotate(-45 66 18)"/><ellipse cx="76" cy="9" rx="4" ry="8" transform="rotate(30 76 9)"/><ellipse cx="86" cy="20" rx="4" ry="8" transform="rotate(-50 86 20)"/><ellipse cx="88" cy="7" rx="3.500" ry="8" transform="rotate(15 88 7)"/></g>
    </svg>
  </div>
  <div class="ml-[3px] flex">
    <div class="relative flex w-[62px] items-center justify-center">
      <svg class="h-[30px] w-[30px]" viewBox="0 0 32 32"><circle cx="16" cy="16" r="15.500" fill="url(#edgeTop)"/><path d="M1 17C3 12 8 9 13 10 8 12 7 17 9 21c2 5 7 9 13 9-2 1-4 1.500-6 1.500C7 31.500 1 25 1 17z" fill="#0f6cbd"/><path d="M9 21c3 7 9 9 13 9 4-1 7-4 9-8-2 1-5 2-8 2-4 0-6-2-6-4 0-1 1-2 1-3-3-2-8-1-9 4z" fill="#0c4a8c"/><path d="M14 16c1-3 5-4 8-3 3 2 2 6-1 6-2 0-5 0-6 1z" fill="#e0dcd8"/></svg>
      <div class="absolute bottom-0 left-[6px] h-[3px] w-[51px] bg-[#0a78d4]"></div>
    </div>
    <div class="flex w-[62px] items-center justify-center">
      <svg class="h-[30px] w-[30px]" viewBox="0 0 30 30"><rect width="30" height="30" rx="2" fill="#dd0a20"/><path d="M18 5c-7 1-12 6-11 12 1 5 6 8 11 6 4-2 5-6 3-9-2-3-6-3-8-1-2 3 0 6 2 6 3 0 3-3 2-5l-1-5c0-2 2-3 4-2" fill="none" stroke="#fff" stroke-width="2.200"/></svg>
    </div>
    <div class="flex w-[62px] items-center justify-center">
      <svg class="h-[30px] w-[30px]" viewBox="0 0 32 32"><ellipse cx="12" cy="12" rx="12" ry="10.500" fill="#2fdc6a"/><path d="M5 19l0 6 6-3z" fill="#2fdc6a"/><circle cx="8" cy="9" r="1.500" fill="#14603a"/><circle cx="15" cy="9" r="1.500" fill="#14603a"/><ellipse cx="23" cy="22" rx="9" ry="8" fill="#e8e8e8"/><circle cx="20" cy="20" r="1.100" fill="#888"/><circle cx="26" cy="20" r="1.100" fill="#888"/></svg>
    </div>
    <div class="flex w-[62px] items-center justify-center">
      <svg class="h-[29px] w-[29px]" viewBox="0 0 32 32"><circle cx="16" cy="16" r="15.500" fill="url(#steamBg)"/><path d="M0 19l9 4c1-3 3-4 6-4l4-6a7 7 0 1 1 6 7l-6 4c0 4-6 5-8 1L1 23z" fill="#fff"/><circle cx="24" cy="13" r="4" fill="#14305c"/><circle cx="24" cy="13" r="2.500" fill="#fff"/></svg>
    </div>
    <div class="relative flex w-[62px] items-center justify-center">
      <svg class="h-[30px] w-[30px]" viewBox="0 0 30 30"><rect width="30" height="30" rx="3" fill="url(#simBg)"/><circle cx="15" cy="12" r="9" fill="#e8f4fc"/><path d="M15 12c2-2-2-4-3-1-1 4 5 6 7 2 2-5-4-8-8-5" fill="none" stroke="#1c82d8" stroke-width="1.700"/><text x="15" y="28" text-anchor="middle" font-size="6" fill="#eaf4fc" font-family="Liberation Sans">Simdroid</text></svg>
      <div class="absolute bottom-0 left-[6px] h-[3px] w-[51px] bg-[#0a78d4]"></div>
    </div>
    <div class="relative ml-[1px] flex w-[61px] items-center justify-center bg-[#f6f1ec]">
      <svg class="h-[30px] w-[30px]"><use href="#i-logo"/></svg>
      <div class="absolute bottom-0 left-0 h-[3px] w-[61px] bg-[#0a78d4]"></div>
    </div>
  </div>

  <!-- tray -->
  <svg class="absolute left-[1461px] top-[8px] h-[17px] w-[12px]" viewBox="0 0 12 17"><path d="M0 2l3-2h3v2h6v13l-6 2-6-2z" fill="#f6d879"/><path d="M0 2h6v15H0z" fill="#e8c35a"/></svg>
  <span class="absolute left-[1482px] top-[7px] whitespace-nowrap text-[15px] text-[#222]">OneDrive</span>
  <span class="absolute left-[1554px] top-[-2px] text-[14px] text-[#6d6fb0]">»</span>
  <svg class="absolute left-[1584px] top-[11px] h-[28px] w-[28px]" viewBox="0 0 28 28"><path d="M19 0a14 14 0 1 1-19 19c8 3 22-3 19-19z" fill="#f29a22"/></svg>
  <svg class="absolute left-[1635px] top-[20px] h-[10px] w-[17px]" viewBox="0 0 17 10"><path d="M1 9l7.500-7.500L16 9" fill="none" stroke="#111" stroke-width="1.300"/></svg>
  <svg class="absolute left-[1663px] top-[16px] h-[18px] w-[21px]" viewBox="0 0 21 18"><path d="M1 6h4l5-5v16l-5-5H1z" fill="none" stroke="#111" stroke-width="1.100"/><path d="M13 6c1 2 1 4 0 6M16 3c2 4 2 8 0 12" fill="none" stroke="#111"/><path d="M19 1c2 5 2 11 0 16" fill="none" stroke="#999"/></svg>
  <span class="absolute left-[1691px] top-[10px] text-[20px] font-['Noto_Sans_CJK_SC',sans-serif] leading-[30px] text-black">英</span>
  <span class="absolute left-[1728px] top-[15px] flex h-[20px] w-[20px] items-center justify-center border border-black bg-white font-['Noto_Sans_CJK_SC',sans-serif] text-[14px] text-black">拼</span>
  <div class="absolute left-[1760px] top-[1px] w-[94px] text-center text-[15px] leading-[24px] text-[#111]"><div>21:44</div><div>2023/1/27</div></div>
  <svg class="absolute left-[1868px] top-[13px] h-[24px] w-[32px]" viewBox="0 0 32 24"><path d="M1 0h20v16h-9l-4 4v-4H1z" fill="#000"/><path d="M5 4h12M5 8h12M5 12h8" stroke="#fff"/></svg>
  <span class="absolute left-[1879px] top-[24px] flex h-[20px] w-[20px] items-center justify-center rounded-full border border-[#666] bg-[#c6c6c6] text-[13px] font-bold text-black">1</span>
</footer>

<script>
  // legend colour bands, red at the top through to blue
  var bands = document.getElementById('bands');
  var n = 64, top0 = 689, h = 274 / n;
  for (var i = 0; i < n; i++) {
    var t = (i + .5) / n, r = 0, g = 0, b = 0;
    if (t < .25) { r = 255; g = t / .25 * 255; }
    else if (t < .5) { r = (1 - (t - .25) / .25) * 255; g = 255; }
    else if (t < .75) { g = 255; b = (t - .5) / .25 * 255; }
    else { g = (1 - (t - .75) / .25) * 255; b = 255; }
    var rect = document.createElementNS('http://www.w3.org/2000/svg', 'rect');
    rect.setAttribute('x', 1821);
    rect.setAttribute('y', top0 + i * h);
    rect.setAttribute('width', 15);
    rect.setAttribute('height', h + .5);
    rect.setAttribute('fill', 'rgb(' + Math.round(r) + ',' + Math.round(g) + ',' + Math.round(b) + ')');
    bands.appendChild(rect);
  }
</script>
</body>
</html>
